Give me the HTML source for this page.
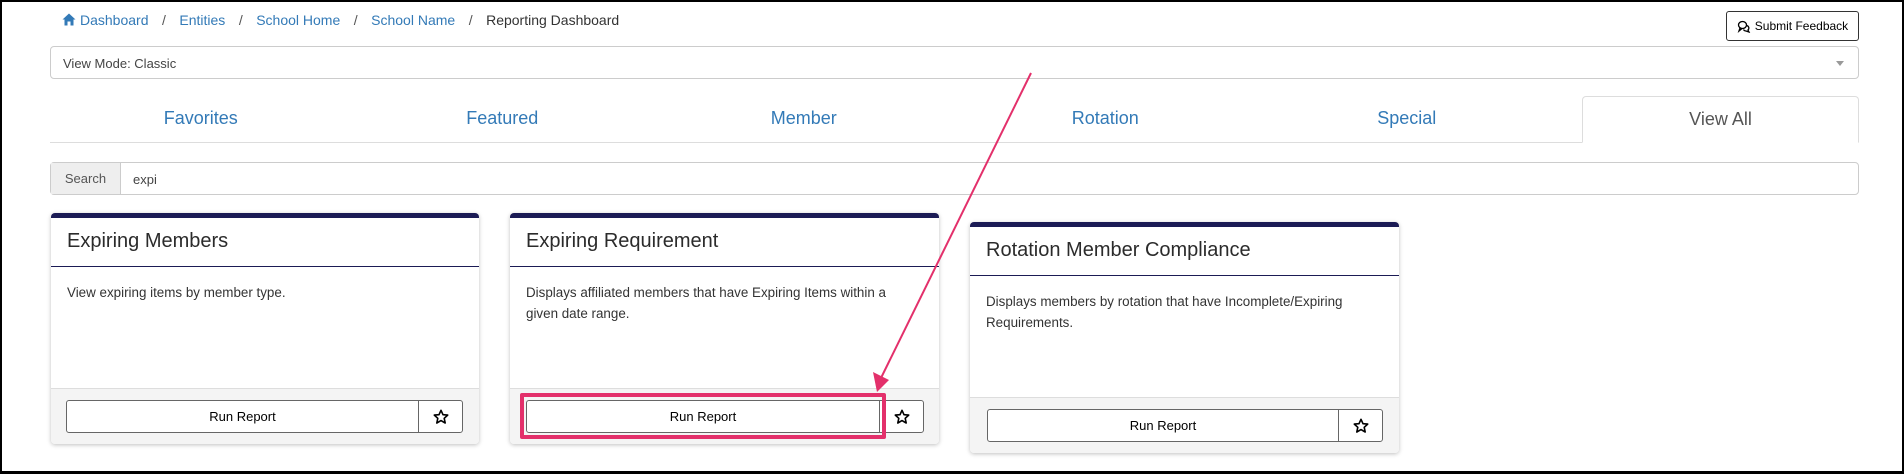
<!DOCTYPE html>
<html><head><meta charset="utf-8"><style>
*{box-sizing:border-box;margin:0;padding:0}
body{width:1904px;height:474px;overflow:hidden;background:#fff;font-family:"Liberation Sans",Arial,sans-serif;position:relative}
.frame{position:absolute;left:0;top:0;width:1904px;height:474px;border:2px solid #000;border-bottom-width:3px}
.abs{position:absolute}
.bc{left:62px;top:12px;font-size:14px;color:#333;white-space:nowrap}
.bc a{color:#337ab7;text-decoration:none}
.bc .s{color:#555;margin:0 13.5px}
.fb{left:1726px;top:11px;width:133px;height:30px;border:1px solid #333;border-radius:3px;font-size:12px;color:#000;display:flex;align-items:center;justify-content:center;gap:4px}
.sel{left:50px;top:46px;width:1809px;height:33px;border:1px solid #ccc;border-radius:4px;font-size:13px;color:#444;padding:9px 12px}
.sel:after{content:"";position:absolute;right:14px;top:14px;border:4px solid transparent;border-top:5px solid #999}
.tabline{left:50px;top:142px;width:1809px;height:1px;background:#ddd}
.tab{top:96px;height:46px;width:301.5px;font-size:18px;color:#337ab7;text-align:center;line-height:44px}
.tab.act{color:#555;border:1px solid #ddd;border-bottom:1px solid #fff;border-radius:4px 4px 0 0;background:#fff;height:47px}
.srch{left:50px;top:162px;width:1809px;height:33px;border:1px solid #ccc;border-radius:4px;display:flex;font-size:13px}
.srch .ad{width:70px;background:#eee;border-right:1px solid #ccc;color:#555;display:flex;align-items:center;justify-content:center}
.srch .in{padding:9px 12px;color:#444}
.card{background:#fff;border-top:5px solid #1b1b55;border-radius:4px;box-shadow:0 1px 4px rgba(0,0,0,.25);overflow:hidden}
.card h3{font-weight:normal;font-size:20px;color:#2b2b2b;padding:0 16px;height:49px;line-height:46px;border-bottom:1.5px solid #1b1b55}
.card p{font-size:13.4px;color:#333;line-height:21px;padding:15px 18px 0 16px}
.ft{position:absolute;left:0;right:0;bottom:0;height:56px;background:#f4f4f4;border-top:1px solid #ddd}
.btn{position:absolute;top:11px;height:33px;border:1px solid #666;border-radius:3px;background:#fff;display:flex;font-size:13px;color:#000}
.btn .r{flex:1;display:flex;align-items:center;justify-content:center;border-right:1px solid #666}
.btn .st{width:43px;display:flex;align-items:center;justify-content:center}
</style></head><body>
<div class="abs bc"><svg width="14" height="13" viewBox="0 0 14 13" style="vertical-align:-1px;margin-right:4px"><path d="M7 0.5L0.5 6.5H2.5V12.5H5.5V8.5H8.5V12.5H11.5V6.5H13.5Z" fill="#337ab7"/></svg><a>Dashboard</a><span class="s">/</span><a>Entities</a><span class="s">/</span><a>School Home</a><span class="s">/</span><a>School Name</a><span class="s">/</span>Reporting Dashboard</div>
<div class="abs fb"><svg width="14" height="13" viewBox="0 0 14 13"><ellipse cx="5.5" cy="5" rx="4" ry="3.5" fill="none" stroke="#000" stroke-width="1.3"/><path d="M3 8L2 11L5 8.5M9.5 5.5C12 6 12.5 8.5 11 10L12 12L9 11C8 11 7 10.5 6.5 9.5" fill="none" stroke="#000" stroke-width="1.3"/></svg>Submit Feedback</div>
<div class="abs sel">View Mode: Classic</div>
<div class="abs tabline"></div>
<div class="abs tab" style="left:50px">Favorites</div>
<div class="abs tab" style="left:351.5px">Featured</div>
<div class="abs tab" style="left:653px">Member</div>
<div class="abs tab" style="left:954.5px">Rotation</div>
<div class="abs tab" style="left:1256px">Special</div>
<div class="abs tab act" style="left:1582px;width:277px">View All</div>
<div class="abs srch"><div class="ad">Search</div><div class="in">expi</div></div>

<svg width="0" height="0" style="position:absolute"><defs><symbol id="star" viewBox="0 0 16 16"><path d="M8 1.3L10 5.7L14.7 6.1L11.2 9.3L12.2 14L8 11.6L3.8 14L4.8 9.3L1.3 6.1L6 5.7Z" fill="none" stroke="#000" stroke-width="1.6" stroke-linejoin="round"/></symbol></defs></svg>

<div class="abs card" style="left:51px;top:213px;width:428px;height:231px"><h3>Expiring Members</h3><p>View expiring items by member type.</p>
<div class="ft"><div class="btn" style="left:15px;width:397px"><div class="r">Run Report</div><div class="st"><svg width="16" height="16"><use href="#star"/></svg></div></div></div></div>

<div class="abs card" style="left:510px;top:213px;width:429px;height:231px"><h3>Expiring Requirement</h3><p>Displays affiliated members that have Expiring Items within a given date range.</p>
<div class="ft"><div class="btn" style="left:16px;width:398px"><div class="r">Run Report</div><div class="st"><svg width="16" height="16"><use href="#star"/></svg></div></div></div></div>

<div class="abs card" style="left:970px;top:222px;width:429px;height:231px"><h3>Rotation Member Compliance</h3><p>Displays members by rotation that have Incomplete/Expiring Requirements.</p>
<div class="ft"><div class="btn" style="left:17px;width:396px"><div class="r">Run Report</div><div class="st"><svg width="16" height="16"><use href="#star"/></svg></div></div></div></div>

<div class="abs" style="left:520px;top:393px;width:366px;height:46px;border:4px solid #e3306b;border-radius:2px"></div>
<svg class="abs" style="left:0;top:0" width="1904" height="474"><line x1="1031" y1="73" x2="881" y2="378" stroke="#e3306b" stroke-width="2"/><path d="M877 392L873 372L889 380Z" fill="#e3306b"/></svg>
<div class="frame"></div>
</body></html>
